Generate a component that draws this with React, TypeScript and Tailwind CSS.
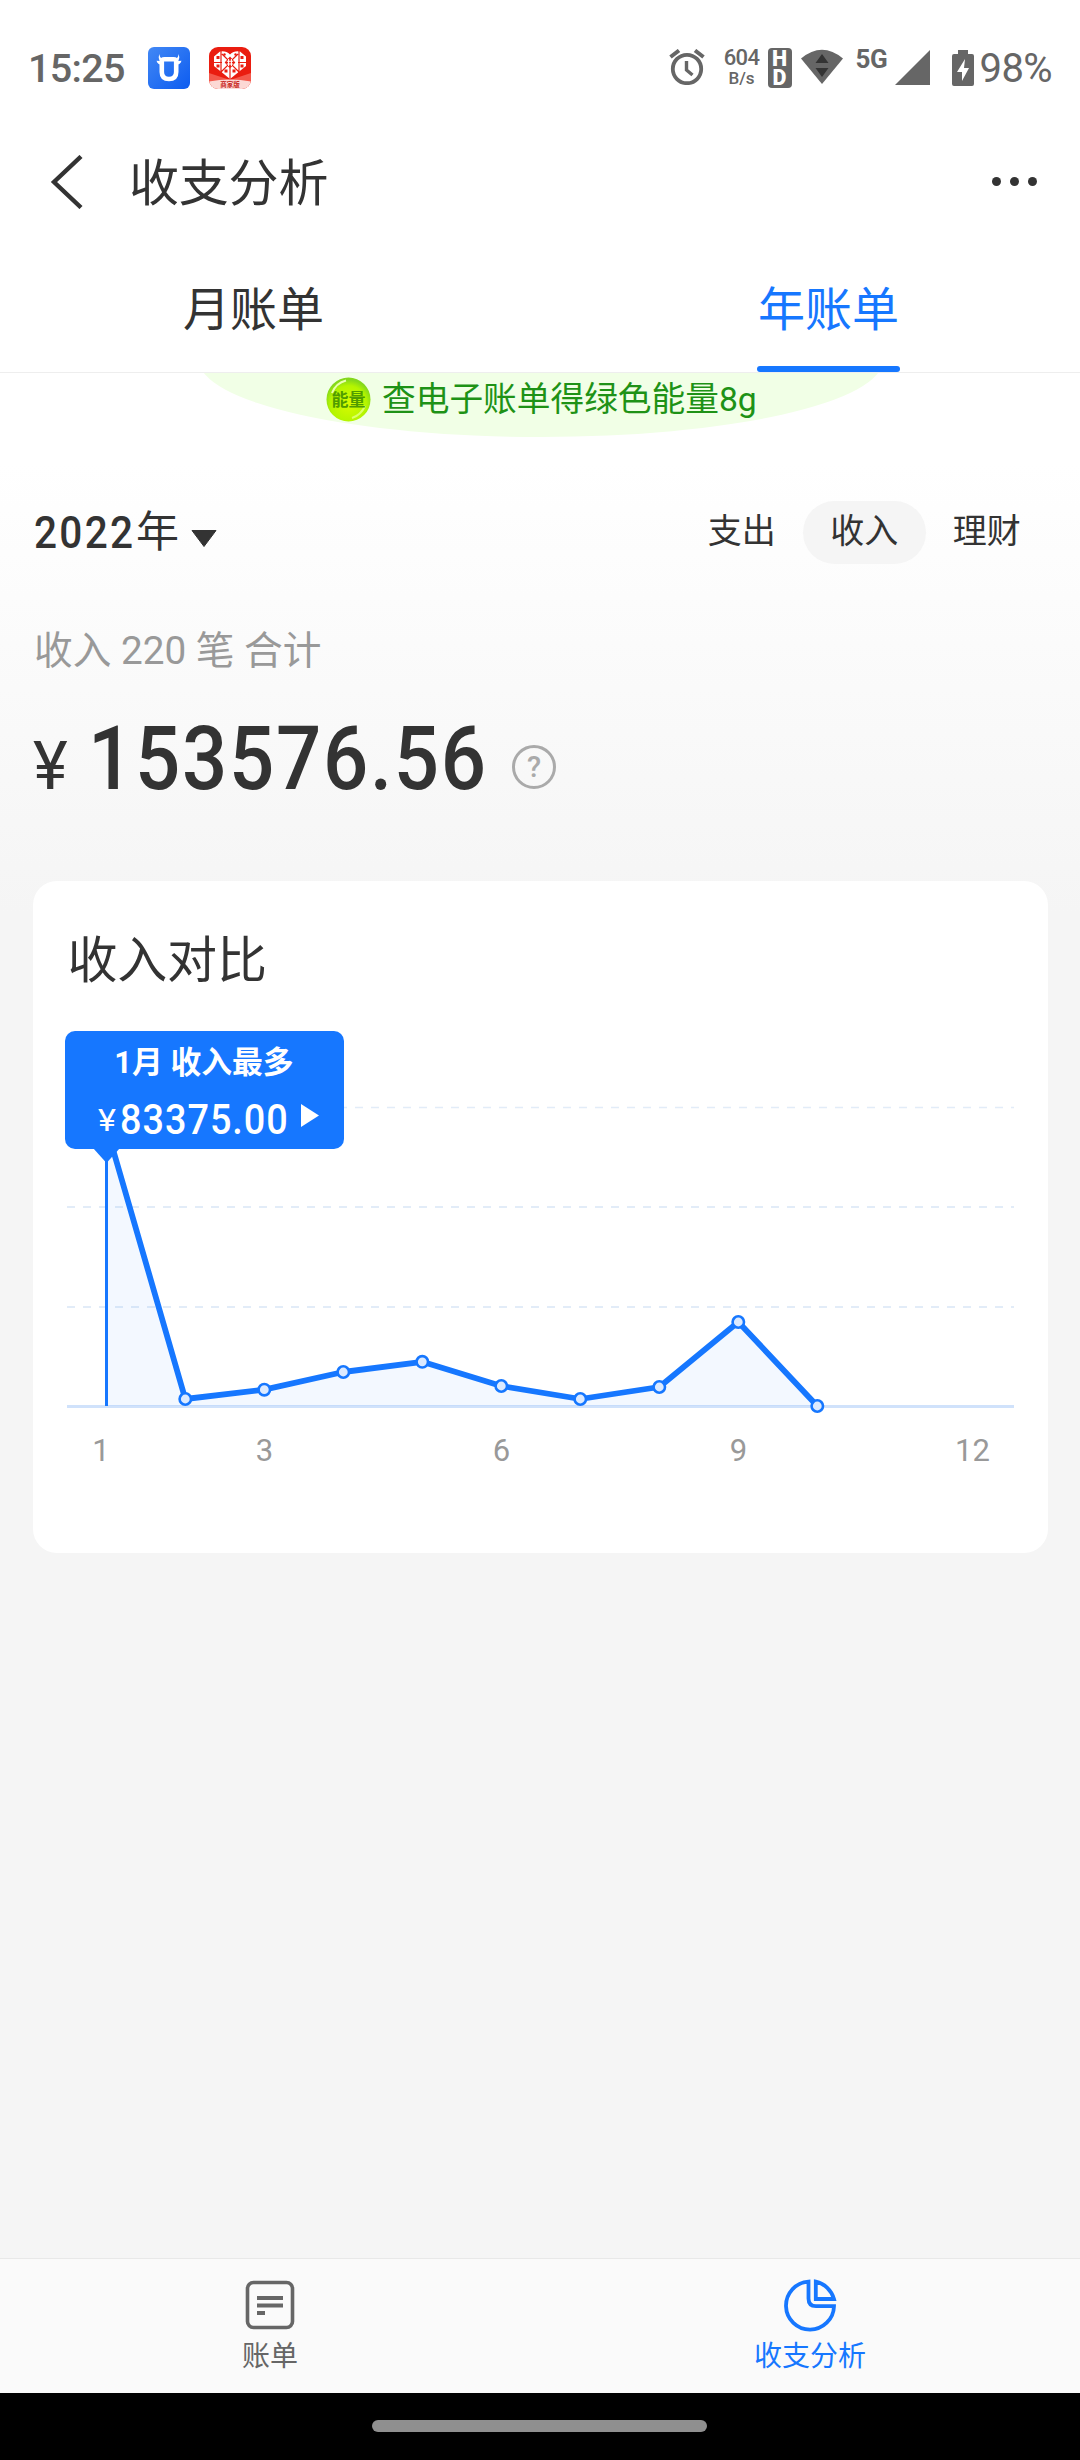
const INCOME = [
  { month: 1, x: 106.5, y: 1127 },
  { month: 2, x: 185.3, y: 1399 },
  { month: 3, x: 264.3, y: 1389.7 },
  { month: 4, x: 343.3, y: 1372 },
  { month: 5, x: 422.3, y: 1361.8 },
  { month: 6, x: 501.3, y: 1386 },
  { month: 7, x: 580.3, y: 1399 },
  { month: 8, x: 659.3, y: 1387 },
  { month: 9, x: 738.3, y: 1322 },
  { month: 10, x: 817.3, y: 1406 },
]

const AXIS_LABELS = [
  { text: '1', x: 101 },
  { text: '3', x: 264.5 },
  { text: '6', x: 501.5 },
  { text: '9', x: 738.5 },
  { text: '12', x: 972.5 },
]

function StatusBar() {
  return (
    <div className="flex h-[136px] items-center pl-[28px] pr-[28px] text-[#666]">
      <span className="mt-[2px] w-[120px] text-[39.5px] leading-none font-medium tracking-[-0.7px]">15:25</span>
      {/* Bull app */}
      <svg className="shrink-0" width="42" height="42" viewBox="0 0 42 42">
        <defs>
          <linearGradient id="bull" x1="0" y1="0" x2="1" y2="1">
            <stop offset="0" stopColor="#4288f5" />
            <stop offset="1" stopColor="#0d5cf0" />
          </linearGradient>
        </defs>
        <rect width="42" height="42" rx="6" fill="url(#bull)" />
        <path d="M13.800 14.500 Q13.800 12.200 16.500 12.200 H25.500 Q28.200 12.200 28.200 14.500 V25 Q28.200 32 21 32 Q13.800 32 13.800 25z" fill="none" stroke="#fff" strokeWidth="4.600" />
        <path d="M11.800 7 Q11 11 15.500 12 L14 18 Q9.500 17.500 8.500 13.800 L12 14 Q9.500 10.500 11.800 7z M30.200 7 Q31 11 26.500 12 L28 18 Q32.500 17.500 33.500 13.800 L30 14 Q32.500 10.500 30.200 7z" fill="#fff" />
      </svg>
      {/* Merchant app */}
      <svg className="ml-[19px] shrink-0" width="42" height="42" viewBox="0 0 42 42">
        <defs>
          <clipPath id="appClip">
            <rect width="42" height="42" rx="9" />
          </clipPath>
        </defs>
        <g clipPath="url(#appClip)">
          <rect width="42" height="42" fill="#ea1d10" />
          <path d="M0 26 L21 33 L42 26 V36 H0z" fill="#f4594c" />
          <path d="M21 7.500 Q25 3.500 31 4.500 L37 9.500 V19 L21 32 L5 19 V9.500 L11 4.500 Q17 3.500 21 7.500z" fill="#fff" />
          <g stroke="#ea1d10" strokeWidth="1.200" fill="none">
            <path d="M12 4 V26 M30 4 V26 M5 15.500 H13 M29 15.500 H37 M13 7 L21 15 L29 7 M12 25 L21 16 L30 25 M21 21 V32" />
            <path d="M16.500 15.500 L21 10.500 L25.500 15.500 L21 20.500z" fill="#ea1d10" />
          </g>
          <g fill="#ea1d10">
            <rect x="7.500" y="9" width="3" height="3" />
            <rect x="31.500" y="9" width="3" height="3" />
            <rect x="7.500" y="17.500" width="3" height="3" />
            <rect x="31.500" y="17.500" width="3" height="3" />
            <rect x="15.500" y="22.500" width="3" height="3" />
            <rect x="23.500" y="22.500" width="3" height="3" />
            <circle cx="15.500" cy="7.500" r="1.200" />
            <circle cx="26.500" cy="7.500" r="1.200" />
          </g>
          <path d="M17.800 14.200 H24.200 M17.800 17 H24.200 M19.600 12 V19 M22.400 12 V19" stroke="#fff" strokeWidth="1.100" />
          <path d="M0 34.500 Q21 30.500 42 34.500 V42 H0z" fill="#fcd9d5" />
          <text x="21" y="40.300" textAnchor="middle" fontSize="6.500" fontWeight="700" fill="#c8281c">商家版</text>
        </g>
      </svg>
      <div className="flex-1" />
      {/* Alarm */}
      <svg className="mb-[2px] shrink-0" width="36" height="36" viewBox="0 0 36 36" fill="none" stroke="#666">
        <circle cx="18" cy="20" r="14.200" strokeWidth="3.800" />
        <path d="M17.500 12 V21 L23.500 26" strokeWidth="3.400" />
        <path d="M1.500 8 L10 1.500 M34.500 8 L26 1.500" strokeWidth="4" />
      </svg>
      <div className="mb-[2px] ml-[18px] flex w-[38px] flex-col items-center font-medium">
        <span className="text-[22px] leading-[22px] tracking-[-0.6px]">604</span>
        <span className="text-[17px] leading-[18px]">B/s</span>
      </div>
      <div className="mb-[1px] ml-[7px] flex h-[40px] w-[24px] items-center justify-center rounded-[4px] bg-[#666]">
        <span className="w-[15px] text-center text-[21.5px] leading-[19px] font-black break-all text-white">HD</span>
      </div>
      <svg className="mb-[2px] ml-[9px] shrink-0" width="42" height="36" viewBox="0 0 42 36">
        <path d="M0 9.500 Q21 -8 42 9.500 L21 35z" fill="#666" />
        <path d="M14.500 14 L21 5 L27.500 14z M14.500 19 L21 28 L27.500 19z" fill="#333" />
      </svg>
      <span className="mb-[18px] ml-[13px] w-[34px] text-[26px] leading-none font-bold tracking-[-0.5px]">5G</span>
      <svg className="mb-[2px] ml-[5px] shrink-0" width="35" height="35" viewBox="0 0 35 35">
        <path d="M35 0 V35 H0z" fill="#666" />
      </svg>
      <svg className="mb-[1px] ml-[22px] shrink-0" width="22" height="36" viewBox="0 0 22 36">
        <path d="M6 0 H16 V4 H20 Q22 4 22 6 V34 Q22 36 20 36 H2 Q0 36 0 34 V6 Q0 4 2 4 H6z" fill="#666" />
        <path d="M13 9 L5 22 H10 V31 L17 18 H12z" fill="#fff" />
      </svg>
      <span className="mt-[2px] ml-[6px] text-[40px] leading-none tracking-[-0.6px]">98%</span>
    </div>
  )
}

function Header() {
  return (
    <div className="flex h-[92px] items-center pl-[49px] pr-[43px]">
      <svg className="mb-[1px]" width="34" height="54" viewBox="0 0 34 54" fill="none" stroke="#333" strokeWidth="4.400">
        <path d="M32 1.500 L5 27 L32 52.500" />
      </svg>
      <h1 className="mt-[3px] ml-[46px] flex-1 text-[50px] leading-none tracking-[-0.2px]">收支分析</h1>
      <div className="mb-[2px] flex gap-[9px]">
        <i className="size-[9px] rounded-full bg-[#333]" />
        <i className="size-[9px] rounded-full bg-[#333]" />
        <i className="size-[9px] rounded-full bg-[#333]" />
      </div>
    </div>
  )
}

function Tabs() {
  return (
    <div className="flex h-[145px] justify-between border-b border-[#eee] pr-[180px] pl-[182px] text-[47px]">
      <div className="flex w-[143px] flex-col items-center justify-between pt-[54px]">
        <span className="leading-[56px]">月账单</span>
      </div>
      <div className="flex w-[143px] flex-col items-center justify-between pt-[54px] text-[#1677ff]">
        <span className="leading-[56px]">年账单</span>
        <div className="h-[6px] w-full rounded-[3px] bg-[#1677ff]" />
      </div>
    </div>
  )
}

function EnergyBanner() {
  return (
    <div className="relative mx-auto h-[64px] w-[690px] overflow-hidden">
      <svg className="absolute inset-0" width="690" height="64" viewBox="0 0 690 64">
        <ellipse cx="346" cy="-13" rx="342" ry="77" fill="#f1ffe6" />
      </svg>
      <div className="relative flex h-[53px] items-center pl-[131px] text-[33.7px] leading-none text-[#1e9216]">
        <svg className="mr-[11px] shrink-0" width="45" height="45" viewBox="0 0 45 45">
          <defs>
            <radialGradient id="coin" cx="0.5" cy="0.6" r="0.55">
              <stop offset="0" stopColor="#d8fb00" />
              <stop offset="0.75" stopColor="#b4f500" />
              <stop offset="1" stopColor="#84d81c" />
            </radialGradient>
          </defs>
          <circle cx="22.500" cy="22.500" r="22" fill="url(#coin)" />
          <path d="M6 16 Q10 6 20 3.500" stroke="#e9ffb0" strokeWidth="2" fill="none" />
          <path d="M39 29 Q35 38 26 41" stroke="#dcff6a" strokeWidth="2" fill="none" />
          <text x="22.500" y="28.500" textAnchor="middle" fontSize="17" fontWeight="700" fill="#4f9c00">能量</text>
        </svg>
        <span className="whitespace-nowrap">查电子账单得绿色能量8g</span>
      </div>
    </div>
  )
}

function Summary() {
  return (
    <div className="h-[444px] px-[32px] pt-[64px]">
      <div className="flex h-[63px] items-center justify-between">
        <div className="flex items-center pl-[2px]">
          <span className="w-[102px] origin-left scale-x-90 text-[45px] leading-none font-medium tracking-[2.6px]">2022</span>
          <span className="text-[43px] leading-none">年</span>
          <svg className="mt-[11px] ml-[12px]" width="26" height="17" viewBox="0 0 26 17">
            <path d="M1 0.500 H25 L13 16.500z" fill="#333" stroke="#333" strokeLinejoin="round" />
          </svg>
        </div>
        <div className="flex text-[34px] leading-[61px]">
          <span className="w-[122.5px] text-center">支出</span>
          <span className="h-[63px] w-[122.5px] rounded-full bg-[#f5f5f5] text-center">收入</span>
          <span className="w-[122.5px] text-center">理财</span>
        </div>
      </div>
      <p className="mt-[64px] pl-[2px] text-[38.7px] leading-[46px] text-[#999]">收入 220 笔 合计</p>
      <div className="mt-[35px] flex items-baseline leading-[100px]">
        <span className="w-[56px] pl-[1px] text-[66px] font-normal">¥</span>
        <span className="w-[424px] origin-left scale-x-90 text-[88.5px] font-medium tracking-[1.9px]">153576.56</span>
        <svg className="mt-[7px] self-center" width="44" height="44" viewBox="0 0 44 44">
          <circle cx="22" cy="22" r="20.500" fill="none" stroke="#aaa" strokeWidth="3" />
          <text x="22" y="32" textAnchor="middle" fontSize="29" fontWeight="500" fill="#aaa">?</text>
        </svg>
      </div>
    </div>
  )
}

function IncomeChart() {
  const line = INCOME.map((p) => `${p.x},${p.y}`).join(' ')
  return (
    <svg className="block" width="1015" height="460" viewBox="33 1020 1015 460">
      <g stroke="#e2ecf8" strokeWidth="2" strokeDasharray="8 8">
        <path d="M67 1107.500 H1014" strokeWidth="1.300" />
        <path d="M67 1207 H1014" />
        <path d="M67 1307 H1014" />
      </g>
      <path d="M67 1406.500 H1014" stroke="#d0e2fb" strokeWidth="3" />
      <polygon points={`106.5,1406 ${line}`} fill="#1677ff" fillOpacity="0.05" />
      <path d="M106.500 1127 V1406" stroke="#1677ff" strokeWidth="3" />
      <polyline points={line} fill="none" stroke="#1677ff" strokeWidth="5.800" strokeLinejoin="round" />
      {INCOME.slice(1).map((p) => (
        <circle key={p.month} cx={p.x} cy={p.y} r="5.700" fill="#dceaff" stroke="#1677ff" strokeWidth="2.600" />
      ))}
      {AXIS_LABELS.map((label) => (
        <text key={label.text} x={label.x} y="1461" textAnchor="middle" fontSize="31" fill="#999">
          {label.text}
        </text>
      ))}
    </svg>
  )
}

function IncomeCard() {
  return (
    <div className="mx-auto h-[672px] w-[1015px] rounded-[24px] bg-white pt-[50px]">
      <h2 className="pl-[35px] text-[50px] leading-[60px] tracking-[-0.2px]">收入对比</h2>
      <div className="relative mt-[29px]">
        <IncomeChart />
        <div className="absolute top-[11px] left-[32px] flex h-[118px] w-[279px] flex-col items-center rounded-[10px] bg-[#1677ff] text-white">
          <span className="mt-[11px] text-[30.8px] leading-[42px] font-bold">1月 收入最多</span>
          <div className="mt-[10px] flex items-center self-start pl-[33px]">
            <span className="mt-[2px] w-[22px] origin-left scale-x-110 text-[31px] leading-[50px]">¥</span>
            <span className="w-[181px] origin-left scale-x-90 text-[42px] leading-[50px] font-medium tracking-[1.1px]">83375.00</span>
            <svg className="mb-[10px]" width="18" height="23" viewBox="0 0 18 23">
              <path d="M0 0 L18 11.500 L0 23z" fill="#fff" />
            </svg>
          </div>
          <svg className="absolute top-[117px] left-[28px]" width="27" height="16" viewBox="0 0 27 16">
            <path d="M0 0 H27 L13.500 15z" fill="#1677ff" />
          </svg>
        </div>
      </div>
    </div>
  )
}

function BottomNav() {
  return (
    <nav className="flex h-[135px] border-t border-[#e8e8e8] bg-[#fafafa] text-[28px]">
      <div className="flex flex-1 flex-col items-center pt-[19px] text-[#666]">
        <svg width="54" height="54" viewBox="0 0 54 54" stroke="#666" fill="none">
          <rect x="4.500" y="4.500" width="45" height="45" rx="6" strokeWidth="3.600" />
          <path d="M14 20 H40 M14 27.500 H40 M14 35 H22" strokeWidth="3.800" />
        </svg>
        <span className="mt-[5px] leading-[40px]">账单</span>
      </div>
      <div className="flex flex-1 flex-col items-center pt-[19px] text-[#1677ff]">
        <svg width="54" height="54" viewBox="0 0 54 54" stroke="#1677ff" strokeWidth="3.800" fill="none">
          <path d="M25.500 3.600 V20.500 Q25.500 28.200 33 28.200 H51 A24 24 0 1 1 25.500 3.600z" />
          <path d="M32.800 3.600 V21 H51 A24.500 24.500 0 0 0 32.800 3.600z" />
        </svg>
        <span className="mt-[5px] leading-[40px]">收支分析</span>
      </div>
    </nav>
  )
}

export default function App() {
  return (
    <div className="flex h-[2460px] w-[1080px] flex-col overflow-hidden bg-[#f5f5f5] font-[Roboto,'Noto_Sans_CJK_SC',sans-serif] text-[#333]">
      <div className="bg-white">
        <StatusBar />
        <Header />
        <Tabs />
      </div>

      <main className="flex-1 bg-[linear-gradient(to_bottom,#fff_0px,#fff_90px,#f5f5f5_540px)]">
        <EnergyBanner />
        <Summary />
        <IncomeCard />
      </main>

      <BottomNav />
      {/* Gesture bar */}
      <div className="flex h-[67px] bg-black pt-[27px] pl-[372px]">
        <div className="h-[12px] w-[335px] rounded-full bg-[#8f8f8f]" />
      </div>
    </div>
  )
}
